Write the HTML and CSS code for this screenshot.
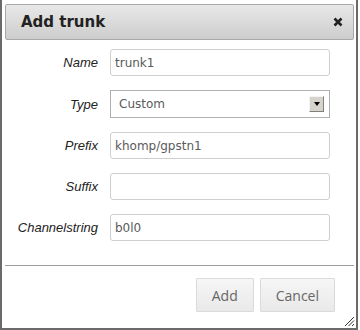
FILE: index.html
```html
<!DOCTYPE html>
<html lang="en">
  <head>
    <meta charset="UTF-8" />
    <title>Add trunk</title>
    <link rel="stylesheet" href="styles.css">
  </head>
  <body>
    <div class="dialog">
      <div class="titlebar">
        <span class="title">Add trunk</span>
        <svg class="close" width="10" height="10" viewBox="0 0 10 10">
          <path d="M1.5 1.5 L8.5 8.5 M8.5 1.5 L1.5 8.5" stroke="#222" stroke-width="2.6" />
        </svg>
      </div>

      <form class="form">
        <label class="label" for="name">Name</label>
        <input class="field" id="name" type="text" value="trunk1" />

        <label class="label">Type</label>
        <div class="select">
          <span class="select-text">Custom</span>
          <span class="select-btn">
            <svg width="6" height="4" viewBox="0 0 6 4"><path d="M0 0 H6 L3 4 Z" fill="#000" /></svg>
          </span>
        </div>

        <label class="label" for="prefix">Prefix</label>
        <input class="field" id="prefix" type="text" value="khomp/gpstn1" />

        <label class="label" for="suffix">Suffix</label>
        <input class="field" id="suffix" type="text" value="" />

        <label class="label" for="chan">Channelstring</label>
        <input class="field" id="chan" type="text" value="b0l0" />
      </form>

      <div class="footer">
        <button class="btn">Add</button>
        <button class="btn">Cancel</button>
      </div>

      <!-- grip de redimensionar -->
      <svg class="grip" width="11" height="11" viewBox="0 0 11 11">
        <path d="M1 10 L10 1 M4.5 10 L10 4.5 M8 10 L10 8" stroke="#333" stroke-width="1" />
      </svg>
    </div>
  </body>
</html>
```

FILE: styles.css
```css
body {
  margin: 0;
  background-color: #fff;
}

.dialog {
  position: relative;
  box-sizing: border-box;
  width: 358px;
  height: 330px;
  padding: 4px 2px 0 3px;
  border: 2px solid #6a6a6a;
  border-top: 0;
  background-color: #fff;
}

/* --- barra de título --- */
.titlebar {
  display: flex;
  align-items: center;
  justify-content: space-between;
  box-sizing: border-box;
  height: 36px;
  padding: 0 10px 0 15px;
  border: 1px solid #a8a8a8;
  border-radius: 2px;
  background: linear-gradient(#e8e8e8, #cdcdcd);
}

.title {
  font-family: "DejaVu Sans", sans-serif;
  font-weight: bold;
  font-size: 15px;
  color: #222;
}

/* --- formulario --- */
.form {
  display: grid;
  grid-template-columns: 93px 220px;
  column-gap: 12px;
  row-gap: 14px;
  align-items: center;
  margin: 9px 0 0;
}

.label {
  text-align: right;
  font-family: "Liberation Sans", Arial, sans-serif;
  font-style: italic;
  font-size: 13px;
  color: #222;
}

.field {
  box-sizing: border-box;
  width: 220px;
  height: 27px;
  margin: 0;
  padding: 0 4px;
  border: 1px solid #cfcfcf;
  border-radius: 3px;
  font-family: "DejaVu Sans", sans-serif;
  font-size: 12px;
  color: #5a5a5a;
  background-color: #fff;
}

.select {
  display: flex;
  align-items: center;
  box-sizing: border-box;
  width: 220px;
  height: 28px;
  padding: 0 5px 0 8px;
  border: 1px solid #b0b0b0;
  font-family: "DejaVu Sans", sans-serif;
  font-size: 12px;
  color: #5a5a5a;
}

.select-btn {
  display: flex;
  align-items: center;
  justify-content: center;
  box-sizing: border-box;
  width: 15px;
  height: 16px;
  margin-left: auto;
  border: 1px solid;
  border-color: #f4f4f4 #808080 #808080 #f4f4f4;
  background-color: #d6d3cc;
}

/* --- botones --- */
.footer {
  display: flex;
  justify-content: flex-end;
  gap: 6px;
  margin-top: 24px;
  padding: 12px 19px 0 0;
  border-top: 1px solid #9c9c9c;
}

.btn {
  box-sizing: border-box;
  height: 34px;
  padding: 0 15px;
  border: 1px solid #dadada;
  border-radius: 1px;
  background: linear-gradient(#f6f6f6, #e9e9e9);
  font-family: "Open Sans", sans-serif;
  font-size: 14px;
  color: #666;
}

.grip {
  position: absolute;
  right: 1px;
  bottom: 1px;
}
```
